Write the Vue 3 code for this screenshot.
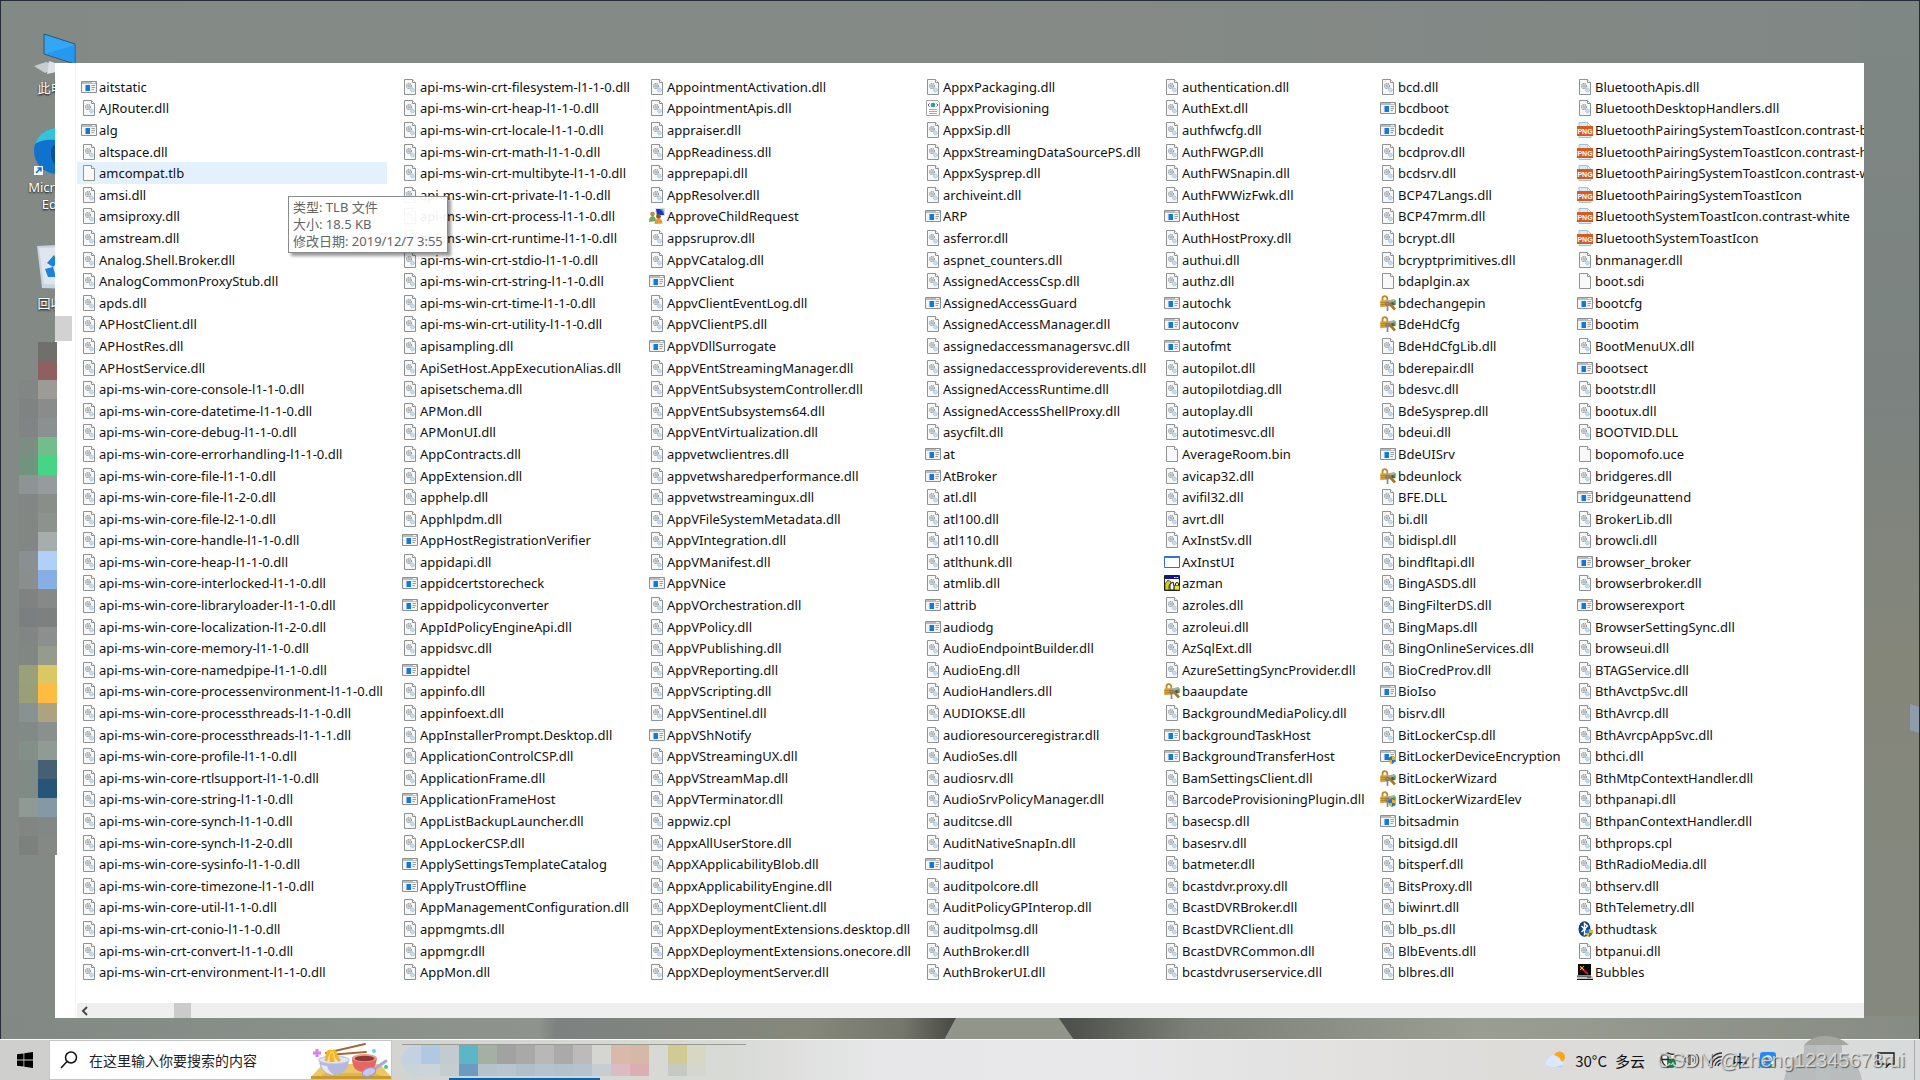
<script setup>
const columns = [
  `aitstatic AJRouter.dll alg altspace.dll amcompat.tlb amsi.dll amsiproxy.dll amstream.dll Analog.Shell.Broker.dll AnalogCommonProxyStub.dll apds.dll APHostClient.dll APHostRes.dll APHostService.dll api-ms-win-core-console-l1-1-0.dll api-ms-win-core-datetime-l1-1-0.dll api-ms-win-core-debug-l1-1-0.dll api-ms-win-core-errorhandling-l1-1-0.dll api-ms-win-core-file-l1-1-0.dll api-ms-win-core-file-l1-2-0.dll api-ms-win-core-file-l2-1-0.dll api-ms-win-core-handle-l1-1-0.dll api-ms-win-core-heap-l1-1-0.dll api-ms-win-core-interlocked-l1-1-0.dll api-ms-win-core-libraryloader-l1-1-0.dll api-ms-win-core-localization-l1-2-0.dll api-ms-win-core-memory-l1-1-0.dll api-ms-win-core-namedpipe-l1-1-0.dll api-ms-win-core-processenvironment-l1-1-0.dll api-ms-win-core-processthreads-l1-1-0.dll api-ms-win-core-processthreads-l1-1-1.dll api-ms-win-core-profile-l1-1-0.dll api-ms-win-core-rtlsupport-l1-1-0.dll api-ms-win-core-string-l1-1-0.dll api-ms-win-core-synch-l1-1-0.dll api-ms-win-core-synch-l1-2-0.dll api-ms-win-core-sysinfo-l1-1-0.dll api-ms-win-core-timezone-l1-1-0.dll api-ms-win-core-util-l1-1-0.dll api-ms-win-crt-conio-l1-1-0.dll api-ms-win-crt-convert-l1-1-0.dll api-ms-win-crt-environment-l1-1-0.dll`,
  `api-ms-win-crt-filesystem-l1-1-0.dll api-ms-win-crt-heap-l1-1-0.dll api-ms-win-crt-locale-l1-1-0.dll api-ms-win-crt-math-l1-1-0.dll api-ms-win-crt-multibyte-l1-1-0.dll api-ms-win-crt-private-l1-1-0.dll api-ms-win-crt-process-l1-1-0.dll api-ms-win-crt-runtime-l1-1-0.dll api-ms-win-crt-stdio-l1-1-0.dll api-ms-win-crt-string-l1-1-0.dll api-ms-win-crt-time-l1-1-0.dll api-ms-win-crt-utility-l1-1-0.dll apisampling.dll ApiSetHost.AppExecutionAlias.dll apisetschema.dll APMon.dll APMonUI.dll AppContracts.dll AppExtension.dll apphelp.dll Apphlpdm.dll AppHostRegistrationVerifier appidapi.dll appidcertstorecheck appidpolicyconverter AppIdPolicyEngineApi.dll appidsvc.dll appidtel appinfo.dll appinfoext.dll AppInstallerPrompt.Desktop.dll ApplicationControlCSP.dll ApplicationFrame.dll ApplicationFrameHost AppListBackupLauncher.dll AppLockerCSP.dll ApplySettingsTemplateCatalog ApplyTrustOffline AppManagementConfiguration.dll appmgmts.dll appmgr.dll AppMon.dll`,
  `AppointmentActivation.dll AppointmentApis.dll appraiser.dll AppReadiness.dll apprepapi.dll AppResolver.dll ApproveChildRequest appsruprov.dll AppVCatalog.dll AppVClient AppvClientEventLog.dll AppVClientPS.dll AppVDllSurrogate AppVEntStreamingManager.dll AppVEntSubsystemController.dll AppVEntSubsystems64.dll AppVEntVirtualization.dll appvetwclientres.dll appvetwsharedperformance.dll appvetwstreamingux.dll AppVFileSystemMetadata.dll AppVIntegration.dll AppVManifest.dll AppVNice AppVOrchestration.dll AppVPolicy.dll AppVPublishing.dll AppVReporting.dll AppVScripting.dll AppVSentinel.dll AppVShNotify AppVStreamingUX.dll AppVStreamMap.dll AppVTerminator.dll appwiz.cpl AppxAllUserStore.dll AppXApplicabilityBlob.dll AppxApplicabilityEngine.dll AppXDeploymentClient.dll AppXDeploymentExtensions.desktop.dll AppXDeploymentExtensions.onecore.dll AppXDeploymentServer.dll`,
  `AppxPackaging.dll AppxProvisioning AppxSip.dll AppxStreamingDataSourcePS.dll AppxSysprep.dll archiveint.dll ARP asferror.dll aspnet_counters.dll AssignedAccessCsp.dll AssignedAccessGuard AssignedAccessManager.dll assignedaccessmanagersvc.dll assignedaccessproviderevents.dll AssignedAccessRuntime.dll AssignedAccessShellProxy.dll asycfilt.dll at AtBroker atl.dll atl100.dll atl110.dll atlthunk.dll atmlib.dll attrib audiodg AudioEndpointBuilder.dll AudioEng.dll AudioHandlers.dll AUDIOKSE.dll audioresourceregistrar.dll AudioSes.dll audiosrv.dll AudioSrvPolicyManager.dll auditcse.dll AuditNativeSnapIn.dll auditpol auditpolcore.dll AuditPolicyGPInterop.dll auditpolmsg.dll AuthBroker.dll AuthBrokerUI.dll`,
  `authentication.dll AuthExt.dll authfwcfg.dll AuthFWGP.dll AuthFWSnapin.dll AuthFWWizFwk.dll AuthHost AuthHostProxy.dll authui.dll authz.dll autochk autoconv autofmt autopilot.dll autopilotdiag.dll autoplay.dll autotimesvc.dll AverageRoom.bin avicap32.dll avifil32.dll avrt.dll AxInstSv.dll AxInstUI azman azroles.dll azroleui.dll AzSqlExt.dll AzureSettingSyncProvider.dll baaupdate BackgroundMediaPolicy.dll backgroundTaskHost BackgroundTransferHost BamSettingsClient.dll BarcodeProvisioningPlugin.dll basecsp.dll basesrv.dll batmeter.dll bcastdvr.proxy.dll BcastDVRBroker.dll BcastDVRClient.dll BcastDVRCommon.dll bcastdvruserservice.dll`,
  `bcd.dll bcdboot bcdedit bcdprov.dll bcdsrv.dll BCP47Langs.dll BCP47mrm.dll bcrypt.dll bcryptprimitives.dll bdaplgin.ax bdechangepin BdeHdCfg BdeHdCfgLib.dll bderepair.dll bdesvc.dll BdeSysprep.dll bdeui.dll BdeUISrv bdeunlock BFE.DLL bi.dll bidispl.dll bindfltapi.dll BingASDS.dll BingFilterDS.dll BingMaps.dll BingOnlineServices.dll BioCredProv.dll BioIso bisrv.dll BitLockerCsp.dll BitLockerDeviceEncryption BitLockerWizard BitLockerWizardElev bitsadmin bitsigd.dll bitsperf.dll BitsProxy.dll biwinrt.dll blb_ps.dll BlbEvents.dll blbres.dll`,
  `BluetoothApis.dll BluetoothDesktopHandlers.dll BluetoothPairingSystemToastIcon.contrast-black BluetoothPairingSystemToastIcon.contrast-high BluetoothPairingSystemToastIcon.contrast-white BluetoothPairingSystemToastIcon BluetoothSystemToastIcon.contrast-white BluetoothSystemToastIcon bnmanager.dll boot.sdi bootcfg bootim BootMenuUX.dll bootsect bootstr.dll bootux.dll BOOTVID.DLL bopomofo.uce bridgeres.dll bridgeunattend BrokerLib.dll browcli.dll browser_broker browserbroker.dll browserexport BrowserSettingSync.dll browseui.dll BTAGService.dll BthAvctpSvc.dll BthAvrcp.dll BthAvrcpAppSvc.dll bthci.dll BthMtpContextHandler.dll bthpanapi.dll BthpanContextHandler.dll bthprops.cpl BthRadioMedia.dll bthserv.dll BthTelemetry.dll bthudtask btpanui.dll Bubbles`,
].map((names) => names.split(' '))

const special = {
  ApproveChildRequest: 'users',
  AppxProvisioning: 'xml',
  AxInstUI: 'window',
  azman: 'azman',
  baaupdate: 'lock',
  bdechangepin: 'lock',
  BdeHdCfg: 'lock',
  bdeunlock: 'lock',
  BitLockerWizard: 'lock',
  BitLockerWizardElev: 'lockshield',
  BitLockerDeviceEncryption: 'exeshield',
  bthudtask: 'bluetooth',
  Bubbles: 'bubbles',
}

function iconOf(name) {
  if (special[name]) return special[name]
  if (/\.(dll|cpl)$/i.test(name)) return 'dll'
  if (/ToastIcon/.test(name)) return 'png'
  if (/\.(tlb|ax|sdi|uce|bin)$/.test(name)) return 'blank'
  return 'exe'
}

const files = columns.flat().map((name) => ({ name, icon: iconOf(name) }))

const sideTiles = [
  ['transparent', '#6f706c'], ['transparent', '#8f6060'], ['#828684', '#9c9c95'], ['#7f8382', '#8a8c8b'],
  ['#808484', '#8b9091'], ['#7a8f82', '#72bd8b'], ['#6f957e', '#45d584'], ['#8d9494', '#949c9d'],
  ['#828684', '#8a8e8a'], ['#838784', '#8c938f'], ['#828785', '#a6adac'], ['#8a9091', '#b1d0f5'],
  ['#8a8f8e', '#86b0e5'], ['#808282', '#878989'], ['#7c7f80', '#7e8080'], ['#818583', '#8b908e'],
  ['#818884', '#959c8c'], ['#9aa07a', '#dbc865'], ['#9b9f78', '#ffbc40'], ['#879291', '#ada47f'],
  ['#818a86', '#8a908d'], ['#83908a', '#909b95'], ['#808b85', '#455f73'], ['#808b85', '#255679'],
  ['#909a95', '#8499a5'], ['#818682', '#828885'], ['#7c807e', '#858986'],
].flat()

const barTiles = [
  ['#c3d2e2', '#c8d3da'], ['#b1c8e3', '#ccd4d9'], ['#c3cbd0', '#c5cdd0'], ['#5bb6c6', '#6d9ac0'],
  ['#a5b0a5', '#b5c2c9'], ['#a2a2a1', '#b8c5cf'], ['#a9a9a8', '#b1bfc9'], ['#b9b8b7', '#b5c3ce'],
  ['#abaaa9', '#b3c1cb'], ['#bdbbba', '#b6c2cd'], ['#d5d6d2', '#c5ced2'], ['#dbb9aa', '#dbbcc3'],
  ['#d5b8a5', '#dcaeb3'], ['transparent', 'transparent'], ['#d2ca95', '#c6cbc1'], ['#d8d6c4', '#d5d7cf'],
]
</script>

<template>
  <div class="desktop">
    <svg class="defs" aria-hidden="true">
      <symbol id="i-dll" viewBox="0 0 16 16">
        <path d="M2.5.5h8l3 3v12h-11z" fill="#f7f8f8" stroke="#8f9293" />
        <path d="M10.5.5v3h3" fill="#fff" stroke="#8f9293" />
        <circle cx="7" cy="7" r="2.4" fill="#dfe3e6" stroke="#929ba2" stroke-width="1.3" stroke-dasharray="1.2 .6" />
        <circle cx="7" cy="7" r=".8" fill="#7f8a92" />
        <circle cx="10.4" cy="11" r="1.9" fill="#c6def0" stroke="#9ec1dd" stroke-dasharray="1 .5" />
      </symbol>
      <symbol id="i-blank" viewBox="0 0 16 16">
        <path d="M2.5.5h8l3 3v12h-11z" fill="#f9f9f9" stroke="#929494" />
        <path d="M10.5.5v3h3" fill="#fff" stroke="#929494" />
      </symbol>
      <symbol id="i-exe" viewBox="0 0 16 16">
        <path d="M.5 2.5h15v11H.5z" fill="#f4f4f4" stroke="#8c9093" />
        <path d="M1 3h14v2H1z" fill="#b7bcc0" />
        <path d="M11 3.6h3" stroke="#fff" />
        <path d="M4.500 6h4.500v6h-4.500z" fill="#0f7bd8" />
        <path d="M10.500 6.500h3.500M10.500 8.500h3.500M10.500 10.500h2.500" stroke="#9aa0a4" />
      </symbol>
      <symbol id="i-shield" viewBox="0 0 16 16">
        <path d="M12 8c1.200 1 2.400 1.300 4 1.300 0 3.500-1.500 5.500-4 6.700-2.500-1.200-4-3.200-4-6.700C9.600 9.300 10.800 9 12 8z" fill="#1d78cf" />
        <path d="M12 8v4h4c.1-1 0-1.800 0-2.700-1.600 0-2.800-.3-4-1.300zM12 12H8.400c.6 1.900 1.800 3.200 3.600 4z" fill="#f6b01a" />
      </symbol>
      <symbol id="i-exeshield" viewBox="0 0 16 16">
        <use href="#i-exe" /><use href="#i-shield" />
      </symbol>
      <symbol id="i-lock" viewBox="0 0 16 16">
        <path d="M8 5.500l6-1.500 2 1.500v4.500l-6 1.500-2-1.500z" fill="#a9aca9" />
        <path d="M11 7.500l4-1v3l-4 1z" fill="#4d524e" />
        <path d="M13.500 6.500h2v2h-2z" fill="#34c73c" />
        <path d="M2.500 6V3.500a2.400 2.400 0 0 1 4.800 0V6" fill="none" stroke="#b98c2a" stroke-width="1.800" />
        <path d="M.3 5.500l8-.5v6.500l-8 .8z" fill="#d9a437" />
        <path d="M.3 7.600l8-.4M.3 9.700l8-.4" stroke="#a67816" stroke-width=".7" />
        <circle cx="7.500" cy="9" r="1.700" fill="none" stroke="#77787a" stroke-width="1.300" />
        <path d="M7.500 10.500V16" stroke="#85878a" stroke-width="1.700" />
        <path d="M9 8l6 6.500" stroke="#a27a27" stroke-width="2.600" />
      </symbol>
      <symbol id="i-lockshield" viewBox="0 0 16 16">
        <use href="#i-lock" /><use href="#i-shield" />
      </symbol>
      <symbol id="i-window" viewBox="0 0 16 16">
        <path d="M.5 2.500h15v11H.5z" fill="#fdfefe" stroke="#3f6fae" />
        <path d="M0 2h16v2H0z" fill="#2c78cf" />
      </symbol>
      <symbol id="i-azman" viewBox="0 0 16 16">
        <path d="M.5.5h15v15H.5z" fill="#fffbd0" stroke="#222" />
        <path d="M1 1h14v3H1z" fill="#16168a" />
        <path d="M10 2.500h4" stroke="#fff" stroke-dasharray="1 .5" />
        <path d="M1 15V9l3-4 3 2v2l-2 1v5z" fill="#d4cf18" stroke="#222" stroke-width=".7" />
        <path d="M6 15V9l3-2 1 4v4z" fill="#fff" stroke="#111" />
        <path d="M11.500 11V9a1.500 1.500 0 0 1 3 0v2" fill="none" stroke="#222" />
        <path d="M10.500 10.500h5v4.500h-5z" fill="#f3e11b" stroke="#222" stroke-width=".6" />
      </symbol>
      <symbol id="i-xml" viewBox="0 0 16 16">
        <path d="M1.500.5h11l2 2v13h-13z" fill="#fcfcfc" stroke="#a3a6a8" />
        <circle cx="8" cy="5" r="2.300" fill="#2e9c93" />
        <path d="M4.500 3.500L3 5l1.500 1.500M11.500 3.500L13 5l-1.500 1.500" fill="none" stroke="#4c5e91" />
        <path d="M4 9.500h8M4 11.500h8M4 13.500h8" stroke="#a7a8b6" />
      </symbol>
      <symbol id="i-png" viewBox="0 0 16 16">
        <path d="M2 .5h8.500L14 4v11.500H2z" fill="#d7ebf8" stroke="#8db7d3" stroke-width=".8" />
        <path d="M10.500.5V4H14z" fill="#fff" stroke="#8db7d3" stroke-width=".6" />
        <path d="M0 4h16v10H0z" fill="#d35c24" />
        <text x="8" y="12" class="png-text">PNG</text>
      </symbol>
      <symbol id="i-users" viewBox="0 0 16 16">
        <path d="M6 0h10v8H7z" fill="#d9dcde" />
        <path d="M7 1h7l1 6H8z" fill="#1538c4" />
        <path d="M11 1h3l1 4z" fill="#6f9bf1" />
        <circle cx="3.500" cy="6" r="2.300" fill="#b78b48" />
        <path d="M0 14c0-4 1.500-6 3.500-6S7 10 7 13z" fill="#77a653" />
        <circle cx="9.500" cy="8.500" r="2.400" fill="#8f5523" />
        <path d="M5.500 16c0-3.500 1.500-5.500 4-5.500s4 2 4 5z" fill="#e09a36" />
      </symbol>
      <symbol id="i-bluetooth" viewBox="0 0 16 16">
        <ellipse cx="7.500" cy="8" rx="6" ry="7.800" fill="#12427f" />
        <path d="M4.500 5l6 6-3 2.500v-11l3 2.500-6 6" fill="none" stroke="#fff" stroke-width="1.400" />
        <use href="#i-shield" />
      </symbol>
      <symbol id="i-bubbles" viewBox="0 0 16 16">
        <path d="M1 0h13v11H1z" fill="#050505" />
        <path d="M3 3l8 7" stroke="#d81f1f" stroke-width="2" />
        <path d="M3 2l4 4M3 6l4-4" stroke="#e8bd25" stroke-width="1" />
        <path d="M0 12h15l1 1v3H0z" fill="#c4c4c4" />
        <path d="M0 15.500h16M0 12h14" stroke="#111" />
        <path d="M10 13.700h4" stroke="#555" />
      </symbol>
    </svg>

    <svg class="wallpaper" viewBox="0 0 1920 1080" preserveAspectRatio="none" aria-hidden="true">
      <defs>
        <linearGradient id="sky" x1="0" y1="0" x2="1" y2="0">
          <stop offset="0" stop-color="#838a86" /><stop offset=".5" stop-color="#858a86" /><stop offset="1" stop-color="#808784" />
        </linearGradient>
        <linearGradient id="rightside" x1="0" y1="0" x2="0" y2="1">
          <stop offset="0" stop-color="#7f8784" /><stop offset=".35" stop-color="#7b8280" /><stop offset=".6" stop-color="#84867a" /><stop offset="1" stop-color="#848980" />
        </linearGradient>
        <linearGradient id="ground" x1="0" y1="0" x2="1" y2="0">
          <stop offset="0" stop-color="#828984" /><stop offset=".28" stop-color="#8e948d" /><stop offset=".29" stop-color="#7d8281" />
          <stop offset=".42" stop-color="#86887b" /><stop offset=".47" stop-color="#75766c" /><stop offset=".5" stop-color="#44453f" />
          <stop offset=".56" stop-color="#50534d" /><stop offset=".62" stop-color="#7d8078" /><stop offset=".77" stop-color="#9a9e92" />
          <stop offset="1" stop-color="#868b84" />
        </linearGradient>
      </defs>
      <path d="M0 0h1920v1080H0z" fill="url(#sky)" />
      <path d="M1860 0h60v1080h-60z" fill="url(#rightside)" />
      <path d="M0 1016h1920v64H0z" fill="url(#ground)" />
      <path d="M944 1040l14-26h98l18 26z" fill="#91958a" />
      <path d="M1910 704l9 3v26l-9-3z" fill="#8f9dab" />
      <path d="M0 0h1920v1H1v1079H0zM1919 0h1v1080h-1z" fill="#252d38" />
    </svg>

    <div class="icons">
      <a href="#" class="shortcut pc">
        <svg viewBox="0 0 48 44">
          <path d="M11 2l31 10v20L11 22z" fill="#33a7f5" stroke="#35536b" />
          <path d="M12 22L42 13v18z" fill="#1c90ec" opacity=".6" />
          <path d="M1 34l12-4 12 4-13 7z" fill="#c8ccd0" />
          <path d="M16 29l12 4v6l-14 3z" fill="#dfe2e5" />
        </svg>
        <span>此电脑</span>
      </a>
      <a href="#" class="shortcut">
        <svg viewBox="0 0 48 48">
          <circle cx="24" cy="24" r="23" fill="#0f72cc" />
          <path d="M2 17C6 6 15 1 24 1c13 0 23 10 23 20-8-8-35-12-45-4z" fill="#35c3dc" />
          <path d="M18 26c0-6 3-9 8-10-4 10 0 20 10 26-12 2-18-6-18-16z" fill="#0b4f94" />
          <path d="M1 39h9v9H1z" fill="#f5f9fd" />
          <path d="M3 46l5-5M4.500 41H8v3.500" fill="none" stroke="#1569bd" stroke-width="1.500" />
        </svg>
        <span>Microsoft Edge</span>
      </a>
      <a href="#" class="shortcut">
        <svg viewBox="0 0 48 48">
          <path d="M4 3l40-2-5 45-30-1z" fill="#c9d4de" />
          <path d="M6 5l35-1-5 38-25-1z" fill="#dfe6ed" />
          <path d="M14 20l7-8 4 7-5 5zM12 26l8-2 3 10h-8z" fill="#1b83de" />
        </svg>
        <span>回收站</span>
      </a>
    </div>

    <main class="stage">
      <section class="explorer">
        <div class="nav"><div class="nav-thumb"></div></div>
        <div class="content">
          <ul class="files">
            <li v-for="f in files" :key="f.name" :class="{ hover: f.name === 'amcompat.tlb' }">
              <svg class="file-icon"><use :href="'#i-' + f.icon" /></svg>
              <span>{{ f.name }}</span>
            </li>
          </ul>
          <div class="scroll">
            <button class="scroll-left" aria-label="向左滚动">
              <svg viewBox="0 0 8 10"><path d="M6 1L2 5l4 4" fill="none" stroke="#4a4a4a" stroke-width="2" /></svg>
            </button>
            <div class="scroll-thumb"></div>
          </div>
        </div>
        <div class="tooltip" role="tooltip">
          <div>类型: TLB 文件</div>
          <div>大小: 18.5 KB</div>
          <div>修改日期: 2019/12/7 3:55</div>
        </div>
      </section>
    </main>

    <div class="side-tiles">
      <i v-for="(c, i) in sideTiles" :key="i" :style="{ background: c }"></i>
    </div>

    <footer class="taskbar">
      <button class="start" aria-label="开始">
        <svg viewBox="0 0 16 16"><path d="M0 2.300l6.500-.9v6.200H0zM7.300 1.300L16 0v7.600H7.300zM0 8.400h6.500v6.200L0 13.700zM7.300 8.400H16V16l-8.700-1.300z" /></svg>
      </button>
      <label class="search">
        <svg class="lens" viewBox="0 0 18 18"><circle cx="11" cy="6.500" r="5.500" /><path d="M7 10.500L1 17" /></svg>
        <input type="text" placeholder="在这里输入你要搜索的内容" aria-label="搜索" />
        <svg class="food" viewBox="0 0 80 38">
          <path d="M12 23h57l11 13H0z" fill="#ecc766" /><path d="M0 35h80v3H0z" fill="#c99a2e" />
          <path d="M14 32h50l6 3H10z" fill="#cfa441" opacity=".5" />
          <path d="M15 12L54 3M17 14l38-3" stroke="#a5683a" stroke-width="2" stroke-linecap="round" />
          <ellipse cx="23" cy="19" rx="15" ry="4" fill="#e3e4f4" stroke="#c9cbe8" stroke-width="1.500" />
          <path d="M15 20c1-5 1-10 4-10 3 0 2 6 3 11M20 21c0-6-1-10 3-11 3 2 0 6 6 10" fill="none" stroke="#f5b520" stroke-width="3" />
          <path d="M8 20c1 9 7 14 15 14s14-5 15-14c-6 4-24 4-30 0z" fill="#b6b9dd" />
          <path d="M10 24c2 6 6 9 13 10-4-3-6-5-7-9z" fill="#e7e8f7" />
          <path d="M18 19c0-4 1-8 3-8 3 0 1 5 3 9" fill="none" stroke="#ffd45a" stroke-width="1.500" />
          <path d="M41 17c0 9 4 14 12 14s12-5 13-14z" fill="#e76565" />
          <ellipse cx="53.500" cy="17" rx="12.500" ry="4" fill="#f19a91" /><ellipse cx="53.500" cy="17.500" rx="10" ry="2.800" fill="#8d3c35" />
          <path d="M75 20L62 29" stroke="#a5a7de" stroke-width="3" stroke-linecap="round" /><ellipse cx="58" cy="31" rx="7" ry="4" transform="rotate(-18 58 31)" fill="#c7c8ef" stroke="#9597cf" />
          <path d="M6 8v8M2 12h8" stroke="#df7df4" stroke-width="3" /><circle cx="63" cy="10" r="2" fill="#5ed8e8" /><circle cx="75" cy="26" r="2" fill="#44cf6d" />
        </svg>
      </label>
      <div class="running">
        <div class="bar-tiles">
          <div v-for="(t, i) in barTiles" :key="i" class="bar-col">
            <i :style="{ background: t[0] }"></i><i :style="{ background: t[1] }"></i>
          </div>
        </div>
        <div class="active-line"></div>
      </div>
      <div class="tray">
        <svg class="blob" viewBox="0 0 78 44"><path d="M20 9C30-3 52-3 65 9z" fill="#a3a7a0" /><path d="M20 9h38v8c12 6 18 16 20 27H0c2-12 8-22 20-27z" fill="#b0b4b4" opacity=".8" /><path d="M32 9h14v35H32z" fill="#bbc0c0" opacity=".7" /></svg>
        <button class="weather">
          <svg viewBox="0 0 24 18">
            <circle cx="16.500" cy="6" r="5.500" fill="#fba51c" />
            <path d="M5 16a5 5 0 0 1 0-8 6 6 0 0 1 10-2c2 1 2.500 2 2.500 3.500A3.700 3.700 0 0 1 19 16z" fill="#d9e8fb" />
            <path d="M3 15c4 1.500 12 1.500 17-1-1 2-2 2-3 2H5z" fill="#9fbfea" />
          </svg>
          <span>30°C</span><span>多云</span>
        </button>
        <button aria-label="安全">
          <svg viewBox="0 0 16 16"><path d="M8 1c2 1.200 4 1.500 6.500 1.500C15 9 13 13 8 15.500 3 13 1 9 1.500 2.500 4 2.500 6 2.200 8 1zM8 1v14M1.500 7.500h13" fill="#f3f3f3" stroke="#222" stroke-width="1.300" /><circle cx="11.500" cy="11.500" r="4.500" fill="#128247" /><path d="M9.500 11.500l1.500 1.500 2.500-3" fill="none" stroke="#fff" /></svg>
        </button>
        <button aria-label="音量">
          <svg viewBox="0 0 16 16"><path d="M1 6h2l3-3v10l-3-3H1zM8.500 6c1 1 1 3 0 4M10.500 4c2 2 2 6 0 8M12.500 2c3 3 3 9 0 12" fill="none" stroke="#333" /></svg>
        </button>
        <button aria-label="网络">
          <svg viewBox="0 0 16 16"><path d="M1 14A13 13 0 0 1 14 1M4 14A10 10 0 0 1 14 4.500M7 14a7 7 0 0 1 7-6M10 14a4 4 0 0 1 4-3" fill="none" stroke="#333" stroke-width="1.400" /></svg>
        </button>
        <button class="ime">中</button>
        <button class="app" aria-label="助手">
          <svg viewBox="0 0 16 16"><rect width="16" height="16" rx="3" fill="#2688f5" /><path d="M4.500 12V7.500a3.500 3.500 0 0 1 7 0V12M3 9v3M13 9v3" fill="none" stroke="#fff" stroke-width="1.600" /><circle cx="13" cy="13.500" r="1.500" fill="#b7e63c" /></svg>
        </button>
        <button class="notice" aria-label="通知">
          <svg viewBox="0 0 18 16"><path d="M1 1h16v11h-5l-2.500 3v-3H1z" fill="none" stroke="#111" stroke-width="1.300" /></svg>
        </button>
        <div class="watermark">CSDN @zheng12345678rui</div>
      </div>
    </footer>
  </div>
</template>

<style>
body {
  margin: 0;
  background: #838a86;
}
</style>

<style scoped>
.desktop {
  position: relative;
  min-height: 100vh;
  display: flex;
  flex-direction: column;
  overflow: hidden;
  font-family: "Noto Sans", "Noto Sans CJK SC", sans-serif;
  font-size: 13px;
  color: #111;
}
.defs {
  position: absolute;
  width: 0;
  height: 0;
}
.png-text {
  font: bold 7px "Liberation Sans", sans-serif;
  fill: #fff;
  text-anchor: middle;
}
.wallpaper {
  position: absolute;
  inset: 0;
  width: 100%;
  height: 100%;
}
button {
  border: 0;
  padding: 0;
  background: none;
  font: inherit;
  color: inherit;
  display: flex;
  align-items: center;
  justify-content: center;
}
.icons {
  position: absolute;
  top: 32px;
  left: 19px;
  width: 76px;
  display: flex;
  flex-direction: column;
  gap: 30px;
}
.shortcut {
  display: flex;
  flex-direction: column;
  align-items: center;
  gap: 4px;
  color: #fff;
  line-height: 17px;
  text-align: center;
  text-decoration: none;
  text-shadow: 0 1px 2px #000;
}
.shortcut svg {
  width: 48px;
  height: 48px;
  flex: none;
}
.shortcut.pc svg {
  height: 44px;
}
.stage {
  position: relative;
  flex: 1;
  display: flex;
  padding: 63px 56px 21px 55px;
}
.explorer {
  position: relative;
  flex: 1;
  min-width: 0;
  display: flex;
  background: #fff;
}
.nav {
  width: 20px;
  border-right: 1px solid #f4f4f4;
  margin-right: 1px;
  flex: none;
}
.nav-thumb {
  width: 17px;
  height: 25px;
  margin-top: 253px;
  background: #d2d2d2;
}
.content {
  flex: 1;
  min-width: 0;
  display: flex;
  flex-direction: column;
}
.files {
  flex: 1;
  margin: 0;
  padding: 13px 0 20px;
  list-style: none;
  display: grid;
  grid-auto-flow: column;
  grid-template-rows: repeat(42, 1fr);
  grid-template-columns: 321px 247px 276px 239px 216px 197px minmax(0, 1fr);
  overflow: hidden;
}
.files li {
  display: flex;
  align-items: center;
  gap: 2px;
  min-height: 0;
  padding-left: 4px;
  line-height: 20px;
  white-space: nowrap;
}
.files li.hover {
  background: #e3f1fd;
  margin-right: 11px;
}
.file-icon {
  width: 16px;
  height: 16px;
  flex: none;
}
.scroll {
  display: flex;
  height: 15px;
  background: #efefef;
}
.scroll-left {
  width: 16px;
}
.scroll-left svg {
  width: 8px;
  height: 10px;
}
.scroll-thumb {
  width: 17px;
  margin-left: 81px;
  background: #cbcbcb;
}
.tooltip {
  position: absolute;
  left: 233px;
  top: 133px;
  padding: 2px 4px;
  border: 1px solid #8b8b8b;
  background: rgba(255, 255, 255, 0.93);
  box-shadow: 3px 3px 3px rgba(0, 0, 0, 0.4);
  color: #646464;
  line-height: 17px;
  white-space: nowrap;
}
.side-tiles {
  position: absolute;
  left: 19px;
  top: 342px;
  width: 38px;
  display: grid;
  grid-template-columns: 1fr 1fr;
  grid-auto-rows: 19px;
}
.taskbar {
  position: relative;
  display: flex;
  height: 40px;
  border-top: 1px solid #fafafa;
  background: linear-gradient(90deg, #cfd0cd 0, #d3d4d1 20%, #d8dad6 38%, #e7e7e9 46%, #e8e8ea 58%, #dedcd9 78%, #d7dbdb 100%);
}
.start {
  width: 49px;
}
.start svg {
  width: 16px;
  height: 16px;
}
.search {
  display: flex;
  align-items: center;
  box-sizing: border-box;
  width: 343px;
  border: 1px solid #c6c6c6;
  background: #fff;
}
.lens {
  width: 18px;
  height: 18px;
  margin: 0 11px 0 10px;
  fill: none;
  stroke: #111;
  stroke-width: 1.5px;
}
.search input {
  flex: 1;
  min-width: 0;
  border: 0;
  padding: 0;
  outline: 0;
  background: none;
  font: 14px "Noto Sans CJK SC", sans-serif;
}
.search input::placeholder {
  color: #222;
  opacity: 1;
}
.food {
  width: 80px;
  height: 38px;
}
.running {
  width: 344px;
  margin-left: 10px;
  display: flex;
  flex-direction: column;
  justify-content: space-between;
  padding-top: 4px;
}
.bar-tiles {
  display: flex;
  border-top: 1px solid #989a94;
}
.bar-col i {
  display: block;
  width: 19px;
  height: 19px;
}
.bar-col i + i {
  height: 12px;
}
.bar-col:first-child {
  border-radius: 16px 0 0 16px;
  overflow: hidden;
}
.active-line {
  width: 151px;
  height: 2px;
  margin-left: 47px;
  background: #0067b8;
}
.tray {
  position: relative;
  margin-left: auto;
  display: flex;
  gap: 8px;
  padding-right: 25px;
}
.tray::after {
  content: "";
  position: absolute;
  right: 5px;
  top: 0;
  bottom: 0;
  border-right: 1px solid #aaacac;
}
.tray button {
  position: relative;
}
.tray svg {
  width: 16px;
  height: 16px;
}
.tray .blob {
  position: absolute;
  right: 58px;
  bottom: 0;
  width: 78px;
  height: 44px;
}
.tray .weather {
  gap: 8px;
  margin-right: 7px;
  font: 15px "Noto Sans CJK SC", sans-serif;
}
.tray .weather svg {
  width: 24px;
  height: 18px;
}
.tray .ime {
  font: 16px "Noto Sans CJK SC", sans-serif;
}
.tray .app {
  margin-left: 4px;
}
.tray .notice {
  margin-left: 93px;
}
.tray .notice svg {
  width: 18px;
}
.watermark {
  position: absolute;
  right: 15px;
  top: 8px;
  font: 20px/24px "Liberation Sans", sans-serif;
  color: rgba(235, 235, 235, 0.75);
  text-shadow: 1px 1px 1px rgba(70, 70, 70, 0.8);
  white-space: nowrap;
  pointer-events: none;
}
</style>
